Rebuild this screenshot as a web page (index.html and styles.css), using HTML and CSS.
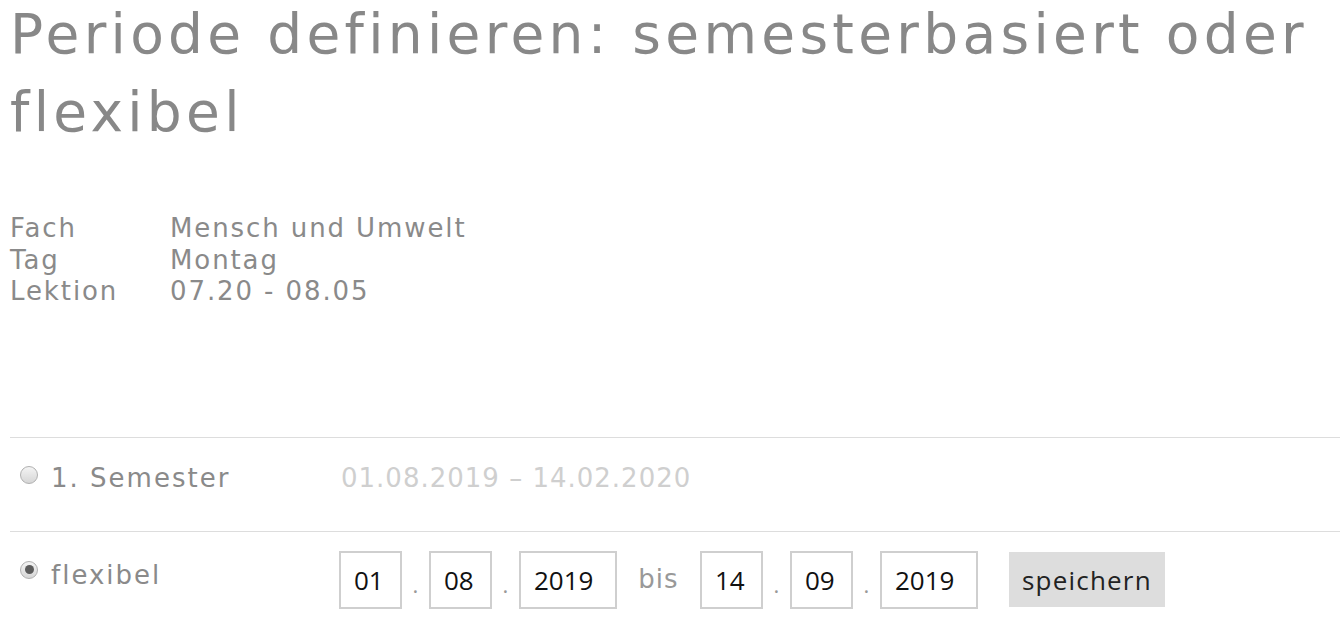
FILE: index.html
```html
<!DOCTYPE html>
<html lang="de">
<head>
<meta charset="utf-8">
<title>Periode definieren</title>
<link rel="stylesheet" href="styles.css">
</head>
<body>
<main class="page">
  <h1 class="title">Periode definieren: semesterbasiert oder flexibel</h1>
  <dl class="info">
    <dt>Fach</dt><dd>Mensch und Umwelt</dd>
    <dt>Tag</dt><dd>Montag</dd>
    <dt>Lektion</dt><dd>07.20 - 08.05</dd>
  </dl>
  <div class="options">
    <div class="row row-semester">
      <label class="choice"><span class="radio"></span><span class="choice-text">1. Semester</span></label>
      <div class="range">01.08.2019 – 14.02.2020</div>
    </div>
    <div class="row row-flex">
      <label class="choice"><span class="radio checked"></span><span class="choice-text">flexibel</span></label>
      <div class="fields">
        <input class="field short" type="text" value="01">
        <span class="sep">.</span>
        <input class="field short" type="text" value="08">
        <span class="sep">.</span>
        <input class="field long" type="text" value="2019">
        <span class="bis">bis</span>
        <input class="field short" type="text" value="14">
        <span class="sep">.</span>
        <input class="field short" type="text" value="09">
        <span class="sep">.</span>
        <input class="field long" type="text" value="2019">
        <button class="save" type="button">speichern</button>
      </div>
    </div>
  </div>
</main>
</body>
</html>
```
FILE: styles.css
```css
html, body {
  margin: 0;
  padding: 0;
  background: #ffffff;
}

body {
  font-family: "DejaVu Sans", "Liberation Sans", sans-serif;
  color: #888888;
  overflow: hidden;
}

.page {
  padding-left: 10px;
}

.title {
  margin: -5px 0 0;
  max-width: 1328px;
  font-size: 55px;
  line-height: 78px;
  font-weight: normal;
  letter-spacing: 4.3px;
  color: #888888;
}

.info {
  display: grid;
  grid-template-columns: 160px auto;
  margin: 62px 0 0;
  font-size: 26px;
  line-height: 31.5px;
  letter-spacing: 1.9px;
  color: #8a8a8a;
}

.info dt,
.info dd {
  margin: 0;
}

.options {
  margin-top: 129px;
  border-top: 1px solid #dddddd;
}

.row {
  display: flex;
  align-items: flex-start;
  border-bottom: 1px solid #dddddd;
}

.row-semester {
  padding: 24px 0 37px;
}

.row-flex {
  padding: 19px 0 30px;
}

.choice {
  display: flex;
  align-items: center;
  width: 329px;
  flex: none;
  font-size: 26px;
  line-height: 32px;
  letter-spacing: 2px;
  color: #8a8a8a;
}

.row-flex .choice {
  margin-top: 8px;
}

.radio {
  box-sizing: border-box;
  width: 18px;
  height: 18px;
  margin: -6px 13px 0 10px;
  border: 1px solid #b0b0b0;
  border-radius: 50%;
  background: linear-gradient(#f4f4f4, #d6d6d6);
  position: relative;
  flex: none;
}

.radio.checked {
  margin-top: -10px;
}

.radio.checked::after {
  content: "";
  position: absolute;
  left: 3.5px;
  top: 3.5px;
  width: 9px;
  height: 9px;
  border-radius: 50%;
  background: #5c5c5c;
}

.range {
  padding-left: 2px;
  font-size: 26px;
  line-height: 32px;
  letter-spacing: 1px;
  color: #cfcfcf;
}

.fields {
  display: flex;
  align-items: center;
}

.field {
  box-sizing: border-box;
  height: 58px;
  margin: 0;
  padding: 0 0 0 13px;
  border: 2px solid #cfcfcf;
  border-radius: 0;
  background: #ffffff;
  font-family: "Open Sans", "Noto Sans", sans-serif;
  font-size: 26px;
  color: #111111;
  outline: none;
}

.field.short {
  width: 63px;
}

.field.long {
  width: 98px;
}

.sep {
  width: 27px;
  text-align: center;
  align-self: flex-end;
  padding-bottom: 10px;
  font-family: "Open Sans", sans-serif;
  font-size: 22px;
  color: #999999;
}

.bis {
  width: 83px;
  text-align: center;
  font-size: 26px;
  letter-spacing: 1px;
  color: #999999;
  padding-bottom: 2px;
}

.save {
  height: 55px;
  margin-left: 31px;
  padding: 0 13px;
  border: none;
  border-radius: 0;
  background: #dddddd;
  font-family: "Open Sans", "Noto Sans", sans-serif;
  font-size: 26px;
  letter-spacing: 1.2px;
  color: #222222;
}
```
